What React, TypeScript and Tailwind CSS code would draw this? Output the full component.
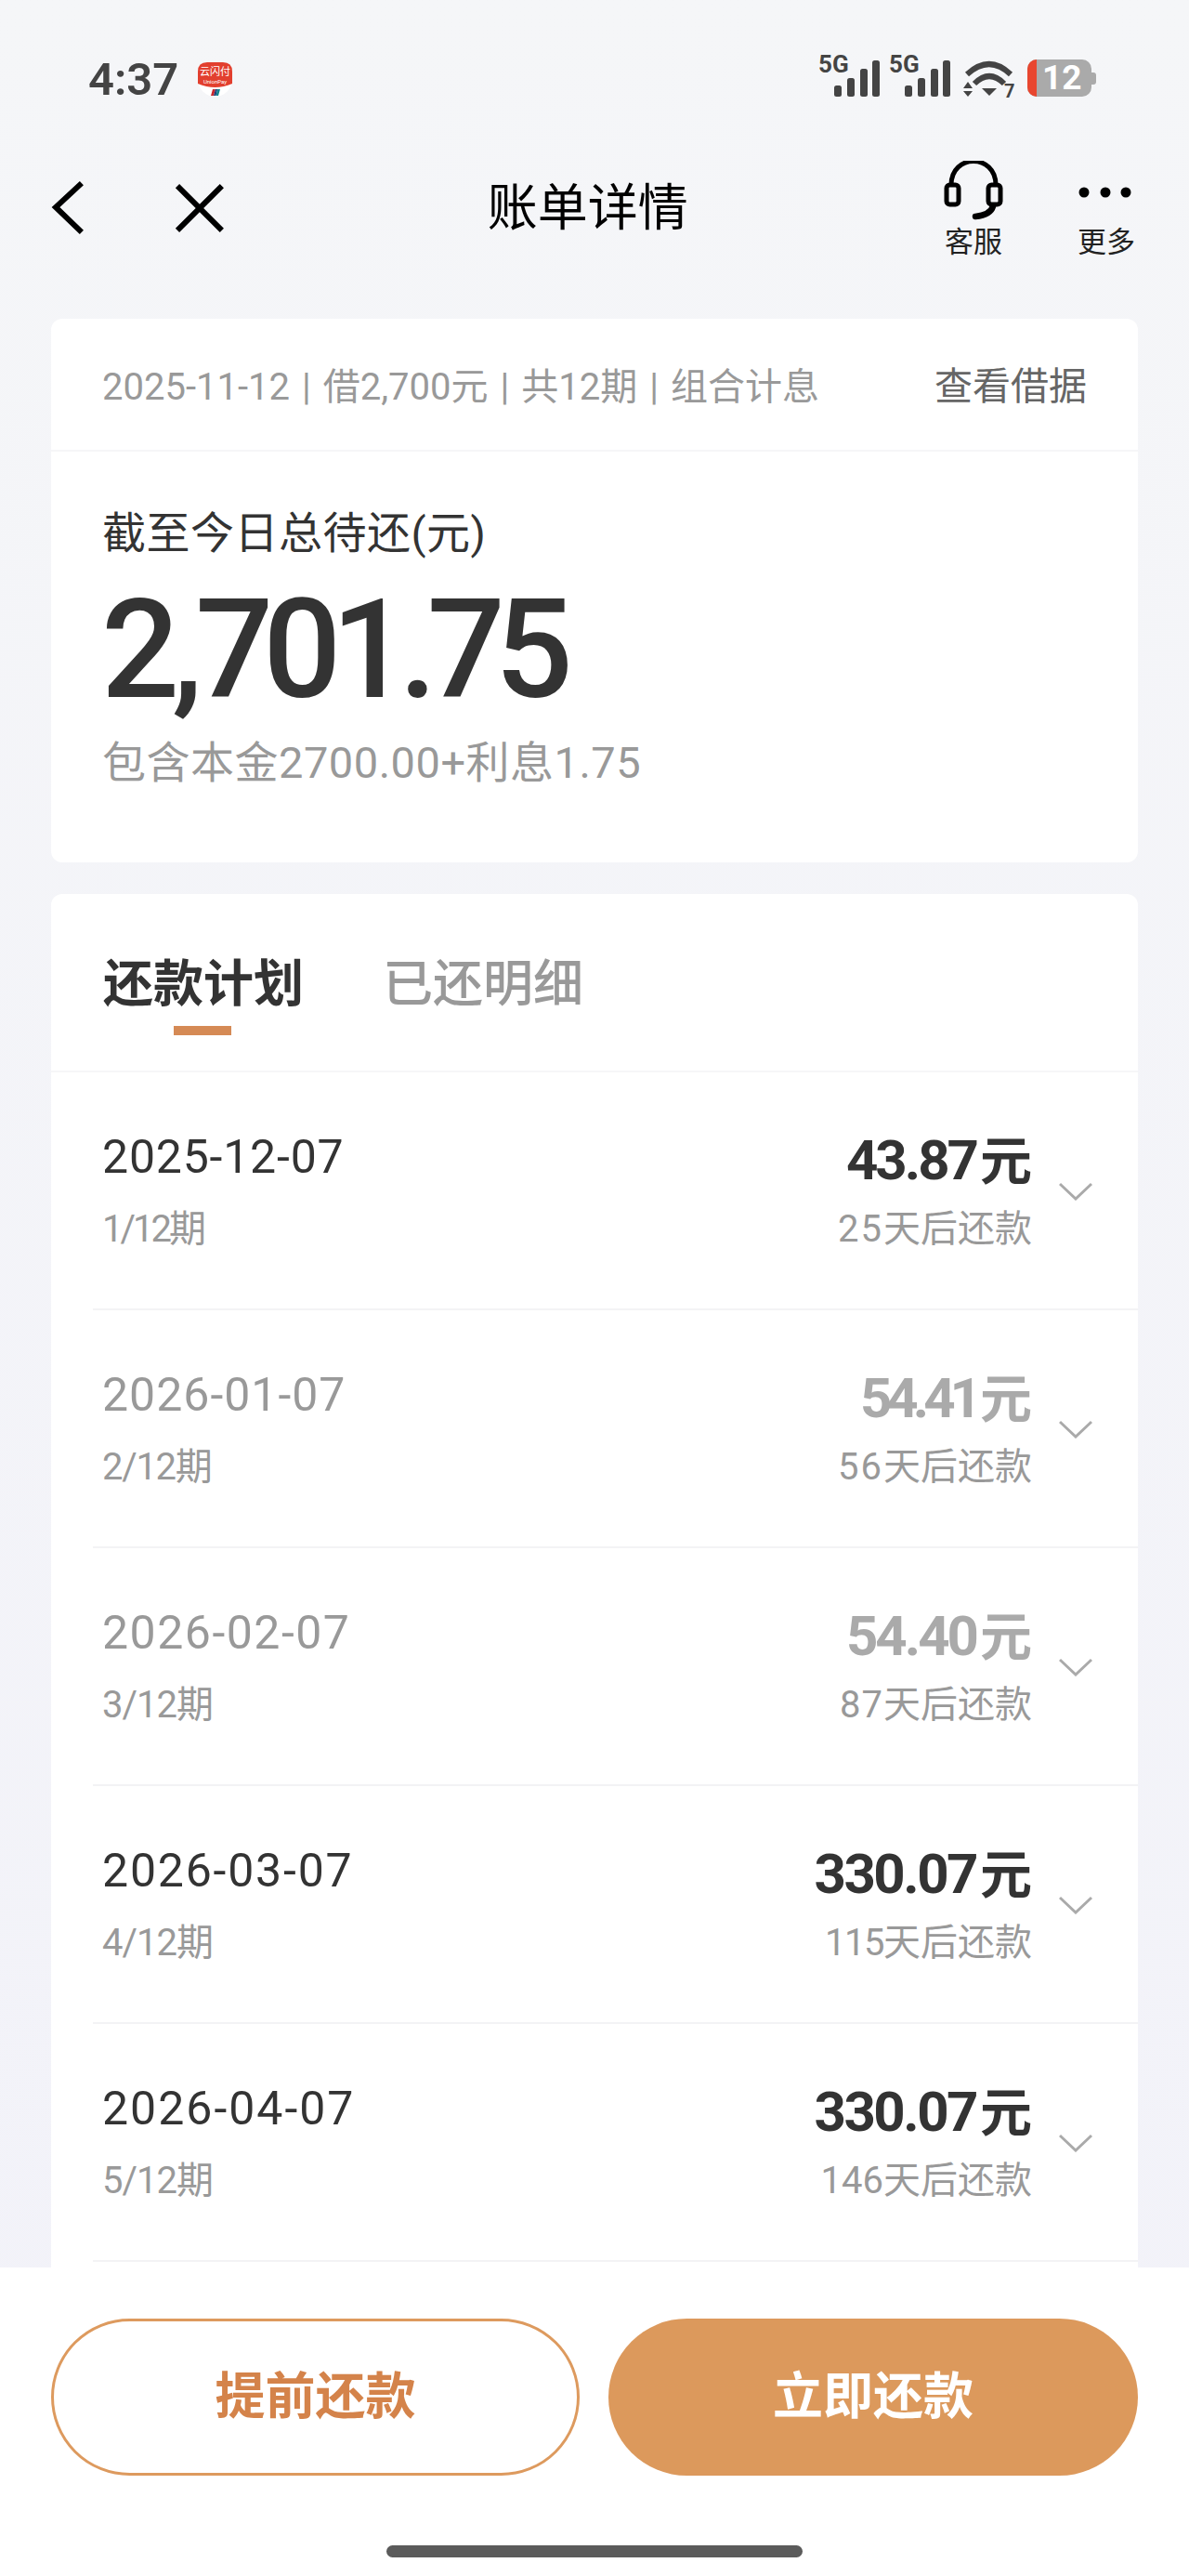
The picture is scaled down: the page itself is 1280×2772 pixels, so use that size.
import React from 'react';

interface PlanRow {
  date: string;
  dateClass: string;
  term: string;
  termClass: string;
  amount: string;
  amountClass: string;
  days: string;
  daysClass: string;
  muted?: boolean;
}

// digits in the design are proportional, Roboto's are tabular: tracking evens that out per row
const PLAN_ROWS: PlanRow[] = [
  { date: '2025-12-07', dateClass: 'tracking-[0.8px]', term: '1/12期', termClass: 'tracking-[-3px]', amount: '43.87', amountClass: 'tracking-[-3px]', days: '25', daysClass: 'tracking-[2px]' },
  { date: '2026-01-07', dateClass: 'tracking-[1px]', term: '2/12期', termClass: 'tracking-[-1.3px]', amount: '54.41', amountClass: 'tracking-[-6px]', days: '56', daysClass: 'tracking-[2px]', muted: true },
  { date: '2026-02-07', dateClass: 'tracking-[1.5px]', term: '3/12期', termClass: 'tracking-[-1px]', amount: '54.40', amountClass: 'tracking-[-3px]', days: '87', daysClass: 'tracking-[1px]', muted: true },
  { date: '2026-03-07', dateClass: 'tracking-[1.8px]', term: '4/12期', termClass: 'tracking-[-1px]', amount: '330.07', amountClass: 'tracking-[-2.5px]', days: '115', daysClass: 'tracking-[-1.5px]' },
  { date: '2026-04-07', dateClass: 'tracking-[2px]', term: '5/12期', termClass: 'tracking-[-1px]', amount: '330.07', amountClass: 'tracking-[-2.5px]', days: '146', daysClass: 'tracking-[0px]' },
];

const BILL_META = ['2025-11-12', '借2,700元', '共12期', '组合计息'];

function Signal() {
  return (
    <svg width="67" height="54" viewBox="0 -10 67 54" className="-mt-[10px] block">
      <text x="0" y="17" fontSize="26" fontWeight="700" fill="#444" fontFamily="Roboto, sans-serif">5G</text>
      <rect x="17" y="31" width="8" height="12" rx="2.5" fill="#444" />
      <rect x="31" y="23" width="8" height="20" rx="2.5" fill="#444" />
      <rect x="45" y="13" width="8" height="30" rx="2.5" fill="#444" />
      <rect x="58" y="4" width="8" height="39" rx="2.5" fill="#444" />
    </svg>
  );
}

function Wifi() {
  return (
    <svg width="58" height="50" viewBox="1037 64 58 50" className="block">
      <path d="M1041 80 Q1065 58 1088 80" fill="none" stroke="#444" strokeWidth="6" />
      <path d="M1049 90 Q1065 74 1081 90" fill="none" stroke="#444" strokeWidth="6" />
      <path d="M1057 95 L1073 95 L1065 103 Z" fill="#444" />
      <path d="M1037 95 L1047 95 L1042 88 Z M1037 98 L1047 98 L1042 104 Z" fill="#444" />
      <text x="1081" y="105" fontSize="20" fontWeight="700" fill="#444" fontFamily="Roboto, sans-serif">7</text>
    </svg>
  );
}

function Battery() {
  return (
    <div className="flex items-center">
      <div className="flex h-[40px] w-[69px] rounded-[10px] bg-[#aaaaaa]">
        <div className="h-full w-[10px] rounded-l-[10px] bg-[#e8462f]" />
        <span className="ml-[6px] text-[37px] leading-[40px] font-bold text-white">12</span>
      </div>
      <div className="h-[13px] w-[5px] rounded-r-[3px] bg-[#aaaaaa]" />
    </div>
  );
}

function UnionLogo() {
  return (
    <svg width="37" height="37" viewBox="0 0 37 37" className="block">
      <circle cx="18.5" cy="18.5" r="18.5" fill="#ffffff" />
      <path d="M0 10 Q0 0 10 0 L27 0 Q37 0 37 10 L37 23 Q18.5 31 0 23 Z" fill="#e23f2e" />
      <text x="18.5" y="14" fontSize="11" textAnchor="middle" fill="#fff" fontFamily="'Noto Sans CJK SC', sans-serif">云闪付</text>
      <text x="18.5" y="23" fontSize="6" textAnchor="middle" fill="#fff" fontFamily="Roboto, sans-serif">UnionPay</text>
      <path d="M14 36 L16 29 L19 29 L17 36 Z" fill="#c8282e" />
      <path d="M17 36 L19 29 L21 29 L19.500 36 Z" fill="#1d3f7a" />
      <path d="M19.500 36 L21 29 L24 29 L22 36 Z" fill="#14838c" />
    </svg>
  );
}

function StatusBar() {
  return (
    <div className="flex h-[170px] items-start justify-between pt-[61px] pr-[100px] pl-[95px]">
      <div className="flex items-center gap-[21px] pt-[6px]">
        <span className="text-[49px] leading-[37px] font-semibold text-[#444444]">4:37</span>
        <UnionLogo />
      </div>
      <div className="flex items-start gap-[9px]">
        <Signal />
        <Signal />
        <div className="ml-[4px] pt-[3px]">
          <Wifi />
        </div>
        <div className="ml-[2px] pt-[3px]">
          <Battery />
        </div>
      </div>
    </div>
  );
}

function NavBar() {
  return (
    <div className="flex h-[173px] items-start pr-[57px] pl-[54px]">
      <svg width="36" height="60" viewBox="0 0 36 60" className="mt-[24px] block">
        <path d="M34 3 L6 29 L34 56" fill="none" stroke="#000" strokeWidth="6" />
      </svg>
      <svg width="54" height="54" viewBox="0 0 54 54" className="mt-[27px] ml-[98px] block">
        <path d="M3 3 L51 51 M51 3 L3 51" fill="none" stroke="#000" strokeWidth="6" />
      </svg>
      <div className="ml-[283px] w-[220px] pt-[21px] text-[54px] leading-[68px] font-normal whitespace-nowrap text-black">账单详情</div>
      <div className="ml-[272px] flex w-[64px] flex-col items-center">
        <svg width="64" height="64" viewBox="1017 172 64 64" className="mt-[3px] block">
          <path d="M1025 198 C1025 164 1073 164 1073 198" fill="none" stroke="#000" strokeWidth="5" />
          <rect x="1020" y="198" width="13" height="21" rx="3.500" fill="none" stroke="#000" strokeWidth="5" />
          <rect x="1065" y="198" width="13" height="21" rx="3.500" fill="none" stroke="#000" strokeWidth="5" />
          <path d="M1070 221 C1068 228 1060 231 1051 232" fill="none" stroke="#000" strokeWidth="6.500" strokeLinecap="round" />
        </svg>
        <span className="mt-[4px] text-[31px] leading-[40px] whitespace-nowrap text-[#222222]">客服</span>
      </div>
      <div className="ml-[79px] flex w-[64px] flex-col items-center">
        <svg width="64" height="64" viewBox="1160 172 64 64" className="mt-[3px] block">
          <circle cx="1168" cy="206" r="5.500" fill="#000" />
          <circle cx="1191" cy="206" r="5.500" fill="#000" />
          <circle cx="1213" cy="206" r="5.500" fill="#000" />
        </svg>
        <span className="mt-[4px] text-[31px] leading-[40px] whitespace-nowrap text-[#222222]">更多</span>
      </div>
    </div>
  );
}

function SummaryCard() {
  return (
    <section className="h-[585px] rounded-[12px] bg-white">
      <div className="flex h-[143px] items-center justify-between border-b-2 border-[#f6f6f8] pt-[6px] pr-[55px] pl-[55px]">
        <div className="flex items-center text-[40px] text-[#999999]">
          {BILL_META.map((item, i) => (
            <React.Fragment key={item}>
              {i > 0 && <span className="mx-[13px]">|</span>}
              <span>{item}</span>
            </React.Fragment>
          ))}
        </div>
        <span className="text-[41px] text-[#666666]">查看借据</span>
      </div>
      <div className="pt-[58px] pl-[55px]">
        <div className="text-[47px] leading-[60px] tracking-[0.5px] text-[#333333]">截至今日总待还(元)</div>
        <div className="mt-[21px] -ml-[1px] text-[148px] leading-[150px] font-medium tracking-[-11px] text-[#333333]">
          2<span className="mx-[3px]">,</span>701.75
        </div>
        <div className="mt-[16px] text-[47px] leading-[60px] tracking-[0.5px] text-[#999999]">包含本金2700.00+利息1.75</div>
      </div>
    </section>
  );
}

function PlanItem({ row }: { row: PlanRow }) {
  return (
    <div className="ml-[45px] flex h-[256px] items-start justify-between border-b-2 border-[#f3f3f5] pr-[49px] pl-[10px]">
      <div className="pt-[61px]">
        <div className={`text-[50px] leading-[60px] ${row.dateClass} ${row.muted ? 'text-[#999999]' : 'text-[#333333]'}`}>{row.date}</div>
        <div className={`mt-[18px] text-[40px] leading-[60px] text-[#999999] ${row.termClass}`}>{row.term}</div>
      </div>
      <div className="flex items-start">
        <div className="flex flex-col items-end pt-[60px]">
          <div className={`flex items-baseline text-[60px] leading-[70px] font-bold ${row.muted ? 'text-[#aaaaaa]' : 'text-[#333333]'}`}>
            <span className={row.amountClass}>{row.amount}</span>
            <span className="ml-[4px] text-[56px]">元</span>
          </div>
          <div className="mt-[9px] text-[40px] leading-[58px] text-[#999999]">
            <span className={row.daysClass}>{row.days}</span>天后还款
          </div>
        </div>
        <svg width="36" height="20" viewBox="0 0 36 20" className="mt-[118px] ml-[29px] block">
          <path d="M1 2 L18 18 L35 2" fill="none" stroke="#aaaaaa" strokeWidth="3" />
        </svg>
      </div>
    </div>
  );
}

function PlanCard() {
  return (
    <section className="mt-[34px] rounded-[12px] bg-white pb-[100px]">
      <div className="border-b-2 border-[#f6f6f8]">
        <div className="flex h-[190px] items-start gap-[85px] pl-[56px]">
          <div className="relative pt-[68px]">
            <span className="text-[54px] leading-[60px] font-bold text-[#333333]">还款计划</span>
            <div className="absolute top-[142px] left-[76px] h-[10px] w-[62px] bg-[#d58a55]" />
          </div>
          <div className="pt-[68px]">
            <span className="text-[54px] leading-[60px] font-medium text-[#999999]">已还明细</span>
          </div>
        </div>
      </div>
      {PLAN_ROWS.map((row) => (
        <PlanItem key={row.date} row={row} />
      ))}
    </section>
  );
}

function ActionBar() {
  return (
    <div className="flex h-[332px] flex-col bg-white">
      <div className="flex gap-[31px] px-[55px] pt-[55px]">
        <button className="h-[169px] w-[569px] rounded-full border-[3px] border-[#dd9a5e] text-[54px] font-bold text-[#d4834a]">提前还款</button>
        <button className="h-[169px] w-[570px] rounded-full bg-[#dc995c] text-[54px] font-bold text-white">立即还款</button>
      </div>
      <div className="mx-auto mt-[75px] h-[13px] w-[448px] rounded-full bg-[#5b5b5b]" />
    </div>
  );
}

export default function App() {
  return (
    <div className="flex h-[2772px] w-[1280px] flex-col overflow-hidden bg-gradient-to-b from-[#f5f6f8] to-[#f2f2f9] font-[family-name:Roboto,'Noto_Sans_CJK_SC',sans-serif]">
      <StatusBar />
      <NavBar />
      <main className="min-h-0 flex-1 overflow-hidden px-[55px]">
        <SummaryCard />
        <PlanCard />
      </main>
      <ActionBar />
    </div>
  );
}
